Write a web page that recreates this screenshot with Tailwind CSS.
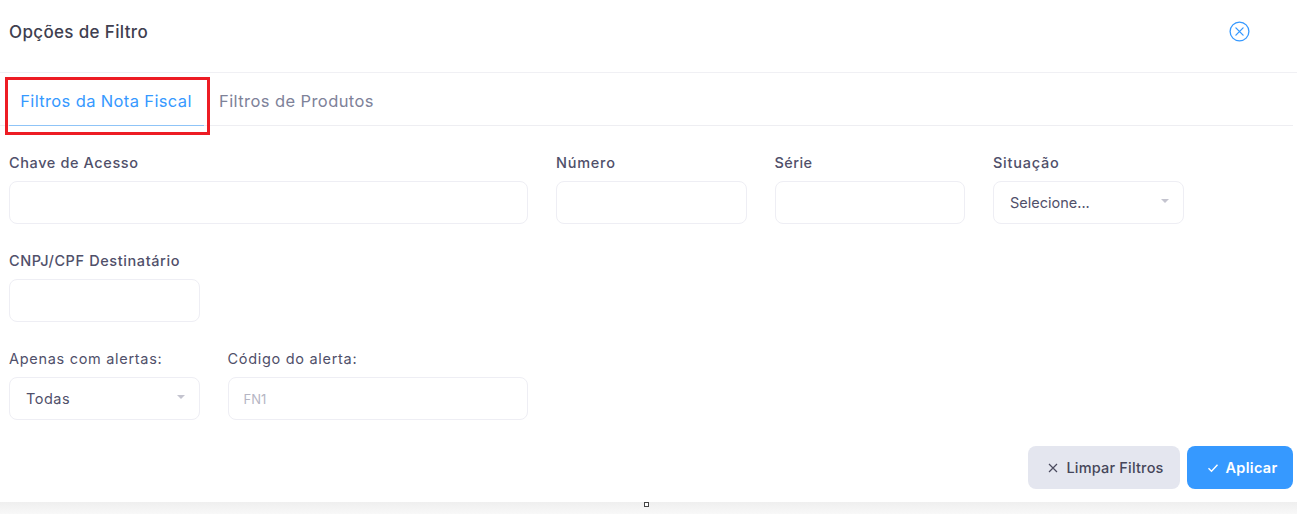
<!DOCTYPE html>
<html><head><meta charset="utf-8"><script src="https://cdn.jsdelivr.net/npm/@tailwindcss/browser@4"></script></head>
<body class="bg-white">
<div class="relative w-[1297px] h-[514px] overflow-hidden bg-white font-['Inter',sans-serif] text-[#50506a]">
  <div class="h-[502px] flex flex-col">
    <header class="h-[73px] shrink-0 border-b border-[#f0f0f4] flex items-center justify-between pl-[9px] pr-[47px] pb-[10px]">
      <h2 class="text-[17px] font-medium text-[#3f3f50] tracking-[0.35px] mt-[3px] -mb-[1px]">Opções de Filtro</h2>
      <svg width="21" height="21" viewBox="0 0 21 21" fill="none" stroke="#3699ff" stroke-width="1.3" stroke-linecap="round"><circle cx="10.5" cy="10.5" r="9.4"/><path d="M6.9 6.9l7.2 7.2M14.1 6.9l-7.2 7.2"/></svg>
    </header>
    <nav class="h-[53px] shrink-0 mr-[4px] border-b border-[#eeeef2] flex items-stretch pl-[9px]">
      <button class="w-[195px] -mb-px pt-[4px] pr-[1px] border-b border-[#8fc4f7] text-[16.5px] tracking-[0.36px] text-[#3699ff] text-center">Filtros da Nota Fiscal</button>
      <button class="ml-[15px] pt-[4px] text-[16.5px] tracking-[0.42px] text-[#7e8299]">Filtros de Produtos</button>
    </nav>
    <main class="pl-[9px] pt-[26px] flex flex-col gap-[26px]">
      <div class="flex">
        <label class="w-[518.5px] mr-[28.5px] block"><span class="block text-[14.5px] font-medium tracking-[0.6px] leading-[22px] mb-[7px]">Chave de Acesso</span><input class="w-full h-[43px] rounded-lg border border-[#eeeef4] bg-white"></label>
        <label class="w-[190.5px] mr-[28px] block"><span class="block text-[14.5px] font-medium tracking-[0.75px] leading-[22px] mb-[7px]">Número</span><input class="w-full h-[43px] rounded-lg border border-[#eeeef4] bg-white"></label>
        <label class="w-[190.5px] mr-[28px] block"><span class="block text-[14.5px] font-medium tracking-[0.4px] leading-[22px] mb-[7px]">Série</span><input class="w-full h-[43px] rounded-lg border border-[#eeeef4] bg-white"></label>
        <label class="w-[190.5px] block"><span class="block text-[14.5px] font-medium tracking-[0.75px] leading-[22px] mb-[7px]">Situação</span>
          <div class="h-[43px] rounded-lg border border-[#eeeef4] flex items-center justify-between pl-4 pr-[14px] text-[14.5px]">Selecione...<span class="w-0 h-0 -mt-[3px] border-x-[4px] border-x-transparent border-t-[4px] border-t-[#c4c4cf]"></span></div></label>
      </div>
      <div class="flex">
        <label class="w-[190.5px] block"><span class="block text-[14.5px] font-medium tracking-[0.6px] leading-[22px] mb-[7px] whitespace-nowrap">CNPJ/CPF Destinatário</span><input class="w-full h-[43px] rounded-lg border border-[#eeeef4] bg-white"></label>
      </div>
      <div class="flex gap-[28px]">
        <label class="w-[190.5px] block"><span class="block text-[14.5px] tracking-[0.7px] leading-[22px] mb-[7px] whitespace-nowrap">Apenas com alertas:</span>
          <div class="h-[43px] rounded-lg border border-[#eeeef4] flex items-center justify-between pl-4 pr-[14px] text-[14.5px] tracking-[0.5px]">Todas<span class="w-0 h-0 -mt-[3px] border-x-[4px] border-x-transparent border-t-[4px] border-t-[#c4c4cf]"></span></div></label>
        <label class="w-[300px] block"><span class="block text-[14.5px] tracking-[0.7px] leading-[22px] mb-[7px]">Código do alerta:</span><input placeholder="FN1" class="w-full h-[43px] rounded-lg border border-[#eeeef4] bg-white pl-[15px] text-[13px] placeholder:text-[#b5b5c3]"></label>
      </div>
      <div class="flex justify-end gap-[7px] pr-[4px]">
        <button class="w-[152px] h-[43px] pl-[4px] rounded-lg bg-[#e4e6ef] flex items-center justify-center gap-[8px] text-[14.5px] font-medium tracking-[0.2px] text-[#46465a]">
          <svg width="10" height="10" viewBox="0 0 10 10" fill="none" stroke="#4b4b5f" stroke-width="1.2"><path d="M1 1l8 8M9 1l-8 8"/></svg>Limpar Filtros</button>
        <button class="w-[106px] h-[43px] pl-[4px] rounded-lg bg-[#3699ff] flex items-center justify-center gap-[7px] text-[14.5px] font-semibold tracking-[0.3px] text-white">
          <svg width="12" height="10" viewBox="0 0 12 10" fill="none" stroke="#fff" stroke-width="1.4"><path d="M1.5 5.2l3 3 6-6.5"/></svg>Aplicar</button>
      </div>
    </main>
  </div>
  <div class="h-[12px] bg-gradient-to-b from-[#efefef] to-[#f8f8f8]"></div>
  <div class="absolute left-[644px] top-[502px] w-[5px] h-[5px] border border-[#444] bg-white"></div>
  <div class="absolute left-[5px] top-[77px] w-[205px] h-[58px] border-[3px] border-[#ed1c24]"></div>
</div>
</body></html>
